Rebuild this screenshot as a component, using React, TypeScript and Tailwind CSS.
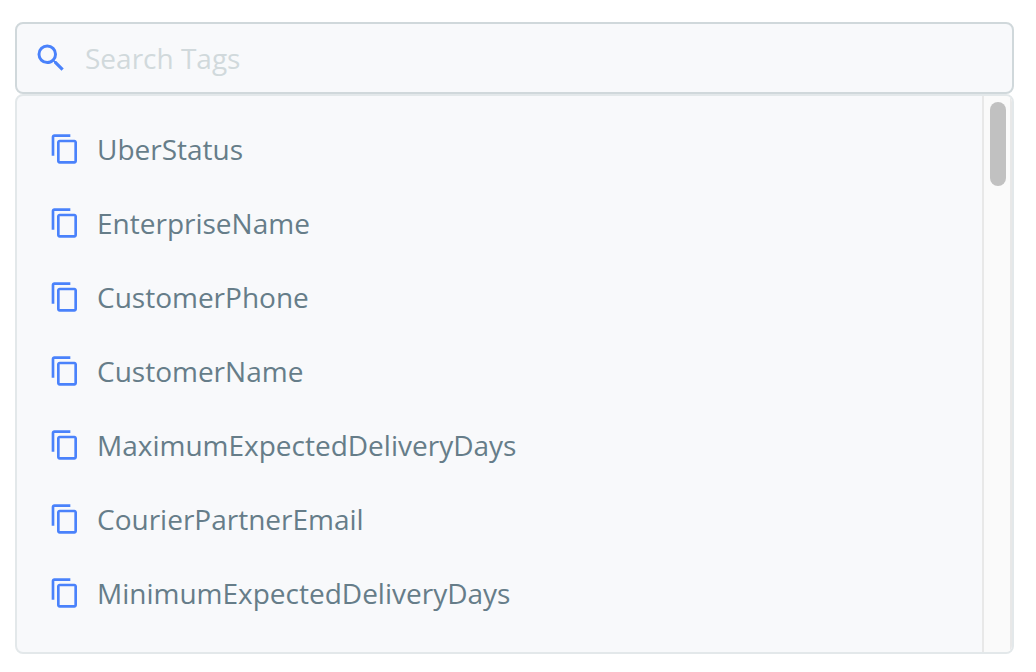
import React, { useState } from "react";
import { MdContentCopy, MdSearch } from "react-icons/md";

// --- Data ---
const tags = [
  "UberStatus",
  "EnterpriseName",
  "CustomerPhone",
  "CustomerName",
  "MaximumExpectedDeliveryDays",
  "CourierPartnerEmail",
  "MinimumExpectedDeliveryDays",
];

const App = () => {
  const [query, setQuery] = useState("");

  const visibleTags = tags.filter((tag) =>
    tag.toLowerCase().includes(query.toLowerCase())
  );

  return (
    <main className="bg-white pt-[22px] pl-[15px] pr-[22px] font-['Open_Sans',sans-serif] text-[28px] leading-10">
      {/* Search box */}
      <label className="flex h-[72px] items-center gap-4 rounded-lg border-2 border-[#d0d8db] bg-[#f8f9fb] px-4">
        <MdSearch size={36} className="shrink-0 text-[#4a82fb]" />
        <input
          type="text"
          aria-label="Search Tags"
          placeholder="Search Tags"
          value={query}
          onChange={(e) => setQuery(e.target.value)}
          className="min-w-0 flex-1 bg-transparent text-[#667d89] outline-none placeholder:text-[#d1d9dc]"
        />
      </label>

      {/* Tag list */}
      <div className="flex min-h-[560px] overflow-hidden rounded-lg border-2 border-[#e3e8ea] bg-[#f8f9fb]">
        <ul className="flex-1 py-4">
          {visibleTags.map((tag) => (
            <li key={tag}>
              <button
                type="button"
                onClick={() => navigator.clipboard?.writeText(tag)}
                className="flex h-[74px] w-full items-center gap-4 px-8 text-left text-[#667d89]"
              >
                <MdContentCopy size={32} className="shrink-0 text-[#4a82fb]" />
                {tag}
              </button>
            </li>
          ))}
        </ul>

        {/* Scroll track */}
        <div className="w-[30px] border-x-2 border-[#e8e8e8] bg-[#fafafa] py-[6px] pr-1 pl-[6px]">
          <div className="h-[84px] w-4 rounded-full bg-[#c1c1c1]" />
        </div>
      </div>
    </main>
  );
};

export default App;
